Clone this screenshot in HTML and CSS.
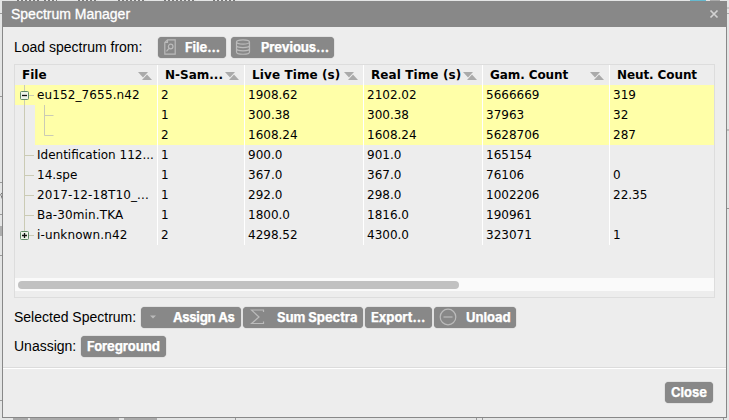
FILE: index.html
```html
<!DOCTYPE html>
<html lang="en">
<head>
<meta charset="utf-8">
<title>Spectrum Manager</title>
<link rel="stylesheet" href="styles.css">
</head>
<body>
<svg class="backdrop" width="729" height="420" viewBox="0 0 729 420" aria-hidden="true">
  <rect width="729" height="420" fill="#e4e5e5"/>
  <path d="M17 0h23M44 0h13M78 0h19M118 0h26M164 0h30M213 0h24" stroke="#777" stroke-width="2" stroke-dasharray="2 2"/>
  <path d="M690 .5h16" stroke="#65b9cf" stroke-width="2"/>
  <path d="M710 .5h10M726 8h3M727 13.5h2" stroke="#aaa"/>
  <path d="M0 13.5h3M0 96.5h3M0 182.5h3M0 214.5h3M0 255.5h3M0 400.5h3M727 130h2M727 208.500h2" stroke="#999"/>
  <path d="M2 193q-2 1-1 2.500t1 3M1 226v10" stroke="#777" fill="none"/>
  <path d="M13 419h15M30 419h89M124 419h33" stroke="#aaa" stroke-width="2"/>
  <path d="M235.500 418v2M476.500 418v2M482.500 418v2M723.500 418v2" stroke="#999"/>
</svg>
<main class="dialog">
  <header class="titlebar"><span>Spectrum Manager</span>
    <svg width="10" height="10" viewBox="0 0 10 10"><path d="M1.500 1.500l7 7M8.500 1.500l-7 7" stroke="#d2d2d2" stroke-width="1.700"/></svg>
  </header>
  <section class="body">
    <div class="line load"><span class="label">Load spectrum from:</span>
      <button class="btn file"><svg width="12" height="16" viewBox="0 0 12 16"><path d="M3.500 .8h7.700v14.400H.8V3.500zM.8 3.500h2.700V.8" /><circle cx="6.700" cy="7.500" r="2.300"/><path d="M5 9.300l-2.500 3"/></svg><span>File...</span></button>
      <button class="btn prev"><svg width="16" height="16" viewBox="0 0 16 16"><ellipse cx="8" cy="3" rx="6.500" ry="2.200"/><path d="M1.500 3v10c0 3 13 3 13 0V3M1.500 6.300c0 3 13 3 13 0M1.500 9.600c0 3 13 3 13 0"/></svg><span>Previous...</span></button>
    </div>
    <div class="table">
      <div class="row head">
        <div><span class="h1">File</span><svg class="sort" viewBox="0 0 14 8"><path d="M0 0h10L5 5.500zM4 8h10L9 2.500z"/></svg></div>
        <div><span class="h2">N-Sam...</span><svg class="sort" viewBox="0 0 14 8"><path d="M0 0h10L5 5.500zM4 8h10L9 2.500z"/></svg></div>
        <div><span class="time">Live Time (s)</span><svg class="sort" viewBox="0 0 14 8"><path d="M0 0h10L5 5.500zM4 8h10L9 2.500z"/></svg></div>
        <div><span class="time">Real Time (s)</span><svg class="sort" viewBox="0 0 14 8"><path d="M0 0h10L5 5.500zM4 8h10L9 2.500z"/></svg></div>
        <div><span class="count">Gam. Count</span><svg class="sort" viewBox="0 0 14 8"><path d="M0 0h10L5 5.500zM4 8h10L9 2.500z"/></svg></div>
        <div><span class="count">Neut. Count</span></div>
      </div>
      <div class="row sel"><div><svg class="tree" viewBox="0 0 20 20"><path class="twig" d="M9.500 0v20M9.500 10.500H19"/><rect class="box" x="5.500" y="6.500" width="8" height="8" rx="1"/><path class="sign" d="M7 10.500h5"/></svg><span class="n0">eu152_7655.n42</span></div><div>2</div><div>1908.62</div><div>2102.02</div><div>5666669</div><div>319</div></div>
      <div class="row sel child"><div><svg class="tree wide" viewBox="0 0 40 20"><path class="twig" d="M9.500 0v20M29.500 0v20M29.500 10.500h9"/></svg></div><div>1</div><div>300.38</div><div>300.38</div><div>37963</div><div>32</div></div>
      <div class="row sel child"><div><svg class="tree wide" viewBox="0 0 40 20"><path class="twig" d="M9.500 0v20M29.500 0v10.500h9"/></svg></div><div>2</div><div>1608.24</div><div>1608.24</div><div>5628706</div><div>287</div></div>
      <div class="row"><div><svg class="tree" viewBox="0 0 20 20"><path class="twig" d="M9.500 0v20M9.500 10.500H19"/></svg><span>Identification 112...</span></div><div>1</div><div>900.0</div><div>901.0</div><div>165154</div><div></div></div>
      <div class="row"><div><svg class="tree" viewBox="0 0 20 20"><path class="twig" d="M9.500 0v20M9.500 10.500H19"/></svg><span>14.spe</span></div><div>1</div><div>367.0</div><div>367.0</div><div>76106</div><div>0</div></div>
      <div class="row"><div><svg class="tree" viewBox="0 0 20 20"><path class="twig" d="M9.500 0v20M9.500 10.500H19"/></svg><span class="n0">2017-12-18T10_...</span></div><div>1</div><div>292.0</div><div>298.0</div><div>1002206</div><div>22.35</div></div>
      <div class="row"><div><svg class="tree" viewBox="0 0 20 20"><path class="twig" d="M9.500 0v20M9.500 10.500H19"/></svg><span class="n0">Ba-30min.TKA</span></div><div>1</div><div>1800.0</div><div>1816.0</div><div>190961</div><div></div></div>
      <div class="row"><div><svg class="tree" viewBox="0 0 20 20"><path class="twig" d="M9.500 0v10M9.500 10.500H19"/><rect class="box" x="5.500" y="6.500" width="8" height="8" rx="1"/><path class="sign" d="M7 10.500h5M9.500 8v5"/></svg><span class="n0">i-unknown.n42</span></div><div>2</div><div>4298.52</div><div>4300.0</div><div>323071</div><div>1</div></div>
      <div class="scroll"><div class="thumb"></div></div>
    </div>
    <div class="line chosen"><span class="label">Selected Spectrum:</span>
      <button class="btn assign"><svg width="8" height="4" viewBox="0 0 8 4"><path class="fill" d="M1 .5h6L4 3.500z"/></svg><span>Assign As</span></button>
      <button class="btn sum"><svg width="15" height="16" viewBox="0 0 15 16"><path d="M13.500 3V1H1.500L9 8l-7.500 6.500h12v-2"/></svg><span>Sum Spectra</span></button>
      <button class="btn export"><span>Export...</span></button>
      <button class="btn unload"><svg width="18" height="18" viewBox="0 0 18 18"><circle cx="9" cy="9" r="7.800"/><path d="M4.500 9h9"/></svg><span>Unload</span></button>
    </div>
    <div class="line unassign"><span class="label">Unassign:</span><button class="btn fore"><span>Foreground</span></button></div>
  </section>
  <footer><button class="btn close"><span>Close</span></button></footer>
</main>
</body>
</html>
```
FILE: styles.css
```css
* { box-sizing: border-box; }
body { margin: 0; width: 729px; height: 420px; overflow: hidden; font-family: "Liberation Sans", sans-serif; font-size: 14px; color: #000; }
.backdrop { position: absolute; left: 0; top: 0; }
.dialog { position: absolute; left: 2px; top: 1px; width: 725px; height: 417px; background: #ededed; border: 1px solid #888; display: flex; flex-direction: column; }
.titlebar { height: 25px; flex: none; background: #888; color: #fff; display: flex; align-items: center; justify-content: space-between; padding: 0 7px 2px 8px; -webkit-text-stroke: .3px #fff; }
.body { height: 100px; flex: 1; padding-left: 11px; }
.line { display: flex; align-items: center; white-space: nowrap; }
.label { padding-bottom: 2px; }
.load { height: 21px; margin-top: 10px; }
.load .label { width: 144px; }
.btn { height: 21px; flex: none; border: 0; border-radius: 4px; box-shadow: 0 0 1px #777; background: #888; color: #fff; font: bold 13px/20px Inter, sans-serif; letter-spacing: -.06px; -webkit-text-stroke: .25px #fff; padding: 0 0 1px; display: flex; align-items: center; }
.btn svg { fill: none; stroke: #bbb; stroke-width: 1.2; flex: none; }
.btn svg .fill { fill: #bbb; stroke: none; }
.file { width: 68px; padding-left: 6px; gap: 9px; }
.prev { width: 103px; margin-left: 5px; padding-left: 4px; gap: 10px; }
.table { width: 701px; height: 234px; margin-top: 6px; border: 1px solid #ddd; display: flex; flex-direction: column; font: 12px/20px "DejaVu Sans", sans-serif; }
.row { display: grid; grid-template-columns: 143px 87px 119px 119px 127px 104px; height: 20px; flex: none; }
.row > div { border-right: 1px solid #fff; padding-left: 3px; white-space: nowrap; display: flex; height: 20px; }
.row > div:first-child { padding-left: 0; }
.row > div:last-child { border: 0; }
.row > div:first-child span { padding-left: 2px; }
.head { font-weight: bold; }
.head > div, .head > div:first-child { padding-left: 7px; align-items: center; justify-content: space-between; padding-right: 5px; }
.head > div:first-child span { padding: 0; }
.time { letter-spacing: .1px; }
.count { letter-spacing: -.1px; }
.n0 { letter-spacing: .12px; }
.sort { width: 14px; height: 8px; fill: #aaa; flex: none; margin-top: 2px; }
.sel { background: #ffffa8; }
.child > div:first-child { background: linear-gradient(90deg, #ededed 20px, transparent 20px); }
.tree { width: 20px; height: 20px; flex: none; }
.tree.wide { width: 40px; }
.twig { stroke: #cbcbb5; fill: none; }
.box { fill: #eef4ea; stroke: #618b68; }
.sign { stroke: #111; stroke-width: 1.3; }
.scroll { height: 13px; background: #fafafa; margin-top: 33px; padding: 3px; }
.thumb { width: 441px; height: 8px; border-radius: 4px; background: #c1c1c1; }
.chosen { height: 21px; margin-top: 9px; }
.chosen .label { width: 127px; }
.assign { width: 100px; padding-left: 8px; gap: 16px; letter-spacing: -.25px; }
.sum { width: 120px; margin-left: 2px; padding-left: 7px; gap: 12px; }
.export { width: 67px; margin-left: 2px; padding-left: 6px; }
.unload { width: 82px; margin-left: 2px; padding-left: 5px; gap: 9px; }
.unassign { height: 21px; margin-top: 8px; }
.unassign .label { width: 67px; }
.fore { width: 85px; padding-left: 6px; }
footer { height: 49px; flex: none; border-top: 1px solid #fff; box-shadow: 0 -1px #dcdcdc; display: flex; justify-content: flex-end; padding: 13px 13px 0; }
.close { width: 48px; padding-left: 6px; }
```
